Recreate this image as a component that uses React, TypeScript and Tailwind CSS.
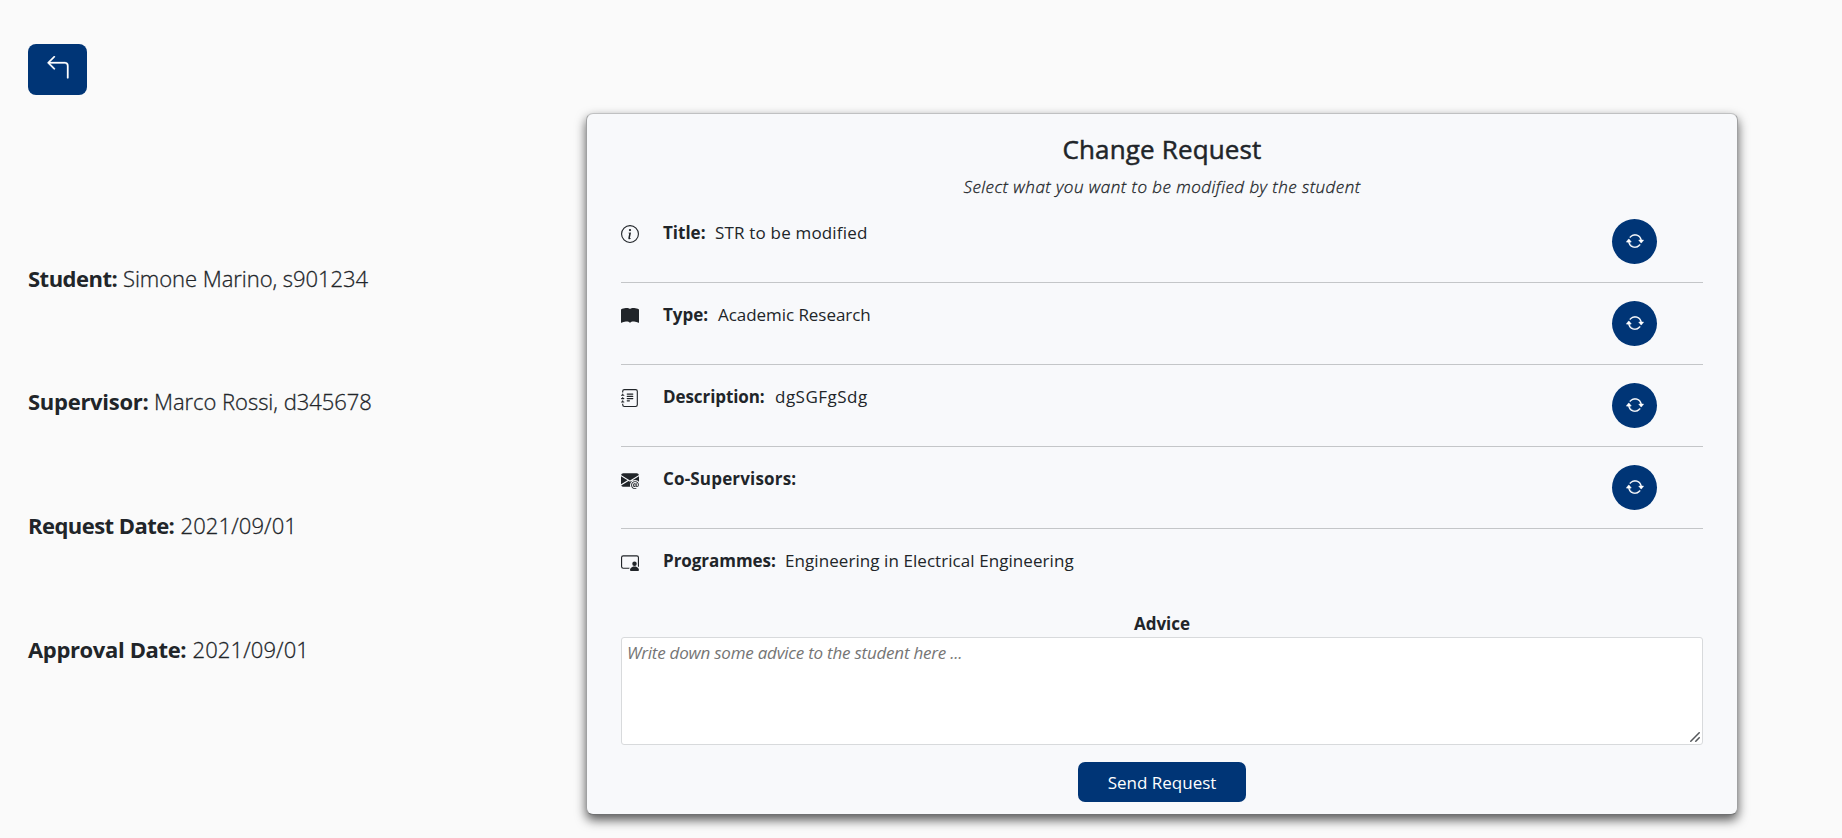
import React from "react";
import {
  BsArrow90DegLeft,
  BsArrowRepeat,
  BsBookFill,
  BsEnvelopeAtFill,
  BsInfoCircle,
  BsJournalText,
  BsPersonVideo3,
} from "react-icons/bs";

type Text = { text: string; className: string };

const details: { label: Text; value: Text }[] = [
  {
    label: { text: "Student:", className: "w-[91px] tracking-[-0.51px]" },
    value: { text: "Simone Marino, s901234", className: "ml-[4px] tracking-[-0.05px]" },
  },
  {
    label: { text: "Supervisor:", className: "w-[122px] tracking-[-0.28px]" },
    value: { text: "Marco Rossi, d345678", className: "ml-[4px] tracking-[-0.04px]" },
  },
  {
    label: { text: "Request Date:", className: "w-[148px] tracking-[-0.55px]" },
    value: { text: "2021/09/01", className: "ml-[4.5px] tracking-[0.1px]" },
  },
  {
    label: { text: "Approval Date:", className: "w-[160px] tracking-[-0.36px]" },
    value: { text: "2021/09/01", className: "ml-[4.5px] tracking-[0.1px]" },
  },
];

const fields: {
  icon: React.ComponentType<{ className?: string }>;
  label: Text;
  value?: Text;
  editable: boolean;
}[] = [
  {
    icon: BsInfoCircle,
    label: { text: "Title:", className: "w-[52px]" },
    value: { text: "STR to be modified", className: "tracking-[0.18px]" },
    editable: true,
  },
  {
    icon: BsBookFill,
    label: { text: "Type:", className: "w-[55px]" },
    value: { text: "Academic Research", className: "tracking-[-0.05px]" },
    editable: true,
  },
  {
    icon: BsJournalText,
    label: { text: "Description:", className: "w-[112px] tracking-[-0.08px]" },
    value: { text: "dgSGFgSdg", className: "tracking-[0.49px]" },
    editable: true,
  },
  {
    icon: BsEnvelopeAtFill,
    label: { text: "Co-Supervisors:", className: "w-[143px] tracking-[0.17px]" },
    editable: true,
  },
  {
    icon: BsPersonVideo3,
    label: { text: "Programmes:", className: "w-[122px] tracking-[-0.04px]" },
    value: { text: "Engineering in Electrical Engineering", className: "tracking-[0.07px]" },
    editable: false,
  },
];

export default function App() {
  return (
    <div className="flex h-[838px] w-full overflow-hidden bg-[#fafafa] font-['Open_Sans','Noto_Sans',sans-serif] text-[#212529]">
      <aside className="w-[586px] shrink-0 pl-7 pt-11">
        <button
          aria-label="Back"
          className="flex h-[51px] w-[59px] items-center justify-center rounded-[8px] bg-[#003576] pb-[4px] text-white"
        >
          <BsArrow90DegLeft className="size-6" strokeWidth={0.2} />
        </button>
        <dl className="mt-[166.8px] flex flex-col gap-[90.6px] text-[22px] leading-[33px]">
          {details.map(({ label, value }) => (
            <div key={label.text} className="flex whitespace-nowrap">
              <dt className={`font-bold ${label.className}`}>{label.text}</dt>
              <dd className={`font-light [-webkit-text-stroke:0.3px] ${value.className}`}>{value.text}</dd>
            </div>
          ))}
        </dl>
      </aside>

      <main className="mt-[113px] h-[702px] w-[1152px] shrink-0 rounded-[7px] border border-x-[#a0a1a2] border-b-[#707172] border-t-[#c0c1c2] bg-[#f8f9fb] px-[34px] pt-[17px] shadow-[0_5px_11px_rgba(0,0,0,0.65)]">
        <h1 className="h-[36px] text-center text-[26px] leading-[36px] tracking-[0.15px] [-webkit-text-stroke:0.5px]">
          Change Request
        </h1>
        <p className="mt-[7px] h-[27px] text-center text-[17px] font-light italic leading-[26px] tracking-[0.47px] [-webkit-text-stroke:0.3px]">
          Select what you want to be modified by the student
        </p>

        <ul>
          {fields.map(({ icon: Icon, label, value, editable }) => (
            <li
              key={label.text}
              className="flex h-[82px] items-start border-b border-[#c4c6c8] pt-[18px] text-[17px] leading-[27px] last:h-[70px] last:border-b-0"
            >
              <Icon className="mt-[6px] size-[18px] shrink-0" />
              <span className={`ml-[24px] whitespace-nowrap font-bold ${label.className}`}>{label.text}</span>
              {value && <span className={`whitespace-nowrap ${value.className}`}>{value.text}</span>}
              {editable && (
                <button
                  aria-label={`Request change of ${label.text}`}
                  className="ml-auto mr-[46px] flex size-[45px] shrink-0 items-center justify-center rounded-full bg-[#003576] pb-[2px] text-white"
                >
                  <BsArrowRepeat className="size-[18px]" strokeWidth={0.3} />
                </button>
              )}
            </li>
          ))}
        </ul>

        <label className="mt-[11px] block text-center text-[17px] font-bold leading-[27px]" htmlFor="advice">
          Advice
        </label>
        <div className="relative">
          <textarea
            id="advice"
            placeholder="Write down some advice to the student here ..."
            className="block h-[108px] w-full resize-none rounded-[3px] border border-[#d8dadc] bg-white px-[5px] py-[1px] text-[17px] leading-[27px] tracking-[-0.23px] placeholder:italic placeholder:text-[#757575]"
          />
          <svg
            viewBox="0 0 10 10"
            className="pointer-events-none absolute bottom-[3px] right-[3px] size-[10px] stroke-[#55585b]"
            strokeWidth="1.5"
            fill="none"
          >
            <path d="M0.3 9.7 9.7 0.3M5.3 9.7 9.7 5.3" />
          </svg>
        </div>
        <button className="mx-auto mt-[17px] flex h-[40px] w-[168px] items-center justify-center rounded-[7px] bg-[#003576] text-[17px] leading-[27px] text-white">
          Send Request
        </button>
      </main>
    </div>
  );
}
